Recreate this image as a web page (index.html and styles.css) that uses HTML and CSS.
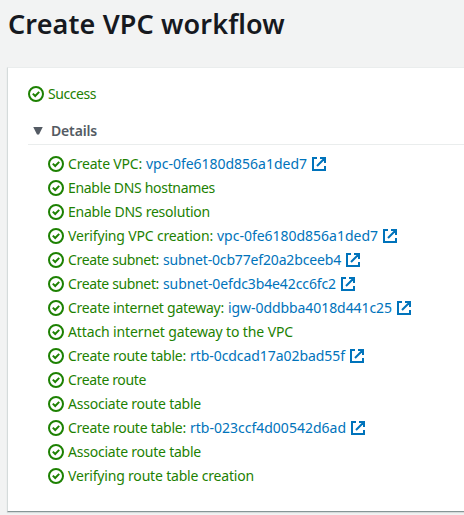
FILE: index.html
```html
<!DOCTYPE html>
<html lang="en">
<head>
<meta charset="utf-8">
<title>Create VPC workflow</title>
<link rel="stylesheet" href="styles.css">
</head>
<body>
<svg class="defs" aria-hidden="true">
<symbol id="ok" viewBox="0 0 16 16"><circle cx="8" cy="8" r="7"/><path d="M4.8 7.6 7.2 10 11.2 5.9"/></symbol>
<symbol id="ext" viewBox="0 0 16 16"><path d="M6 2H2v12h12v-4M9 2h5v5M6 10l8-8"/></symbol>
</svg>
<h1><span data-width="277">Create VPC workflow</span></h1>
<main class="panel">
<div class="status"><svg class="ok"><use href="#ok"/></svg><span data-width="48">Success</span></div>
<section class="details">
<h2><i class="caret"></i><span data-width="46">Details</span></h2>
<ul id="steps"></ul>
</section>
</main>
<script src="script.js"></script>
</body>
</html>
```
FILE: styles.css
```css
body { margin: 0; height: 515px; overflow: hidden; background: #f2f3f3; font: 14px/24px "Noto Sans", "Open Sans", sans-serif; color: #1d8102; }
.defs { display: none; }
span, a { display: inline-block; white-space: nowrap; }
h1 { margin: 0; padding: 6px 0 0 8px; height: 67px; box-sizing: border-box; font-size: 27px; line-height: 36px; font-weight: 600; color: #16191f; }
.panel { margin-left: 7px; height: 445px; box-sizing: border-box; padding: 14px 0 0 20px; background: #fff; border: solid #d5dbdb; border-width: 1px 0 1px 1px; border-top-color: #eaeded; border-bottom-color: #879596; box-shadow: 0 1px 1px #d5dbdb; }
.status, li { display: flex; align-items: center; height: 24px; }
svg { width: 16px; height: 16px; flex: none; fill: none; stroke: currentColor; stroke-width: 2; }
.ok { margin-right: 4px; }
h2 { display: flex; align-items: center; margin: 11px 0 0; height: 27px; border-bottom: 1px solid #eaeded; font-size: 14px; font-weight: 600; color: #545b64; }
.caret { width: 10px; height: 8px; margin: 0 8px 0 5px; background: #545b64; clip-path: polygon(0 0, 100% 0, 60% 100%, 40% 100%); }
ul { list-style: none; margin: 7px 0 0 20px; padding: 0; }
a { color: #0073bb; text-decoration: none; margin-left: 4px; }
.ext { color: #0073bb; margin-left: 4px; }
```
FILE: script.js
```js
const steps = [
  ["Create VPC:", 74, "vpc-0fe6180d856a1ded7", 161], ["Enable DNS hostnames", 147], ["Enable DNS resolution", 142],
  ["Verifying VPC creation:", 145, "vpc-0fe6180d856a1ded7", 161], ["Create subnet:", 91, "subnet-0cb77ef20a2bceeb4", 178],
  ["Create subnet:", 91, "subnet-0efdc3b4e42cc6fc2", 173], ["Create internet gateway:", 156, "igw-0ddbba4018d441c25", 164],
  ["Attach internet gateway to the VPC", 225], ["Create route table:", 118, "rtb-0cdcad17a02bad55f", 155],
  ["Create route", 78], ["Associate route table", 133], ["Create route table:", 118, "rtb-023ccf4d00542d6ad", 156],
  ["Associate route table", 133], ["Verifying route table creation", 186]
];
document.getElementById("steps").innerHTML = steps.map(([t, w, l, lw]) =>
  `<li><svg class="ok"><use href="#ok"/></svg><span data-width="${w}">${t}</span>${l ? `<a href="#" data-width="${lw}">${l}</a><svg class="ext"><use href="#ext"/></svg>` : ""}</li>`).join("");

document.querySelectorAll("[data-width]").forEach(el => {
  const gap = el.dataset.width - el.getBoundingClientRect().width;
  el.style.letterSpacing = `${gap / el.textContent.length}px`;
});
```
